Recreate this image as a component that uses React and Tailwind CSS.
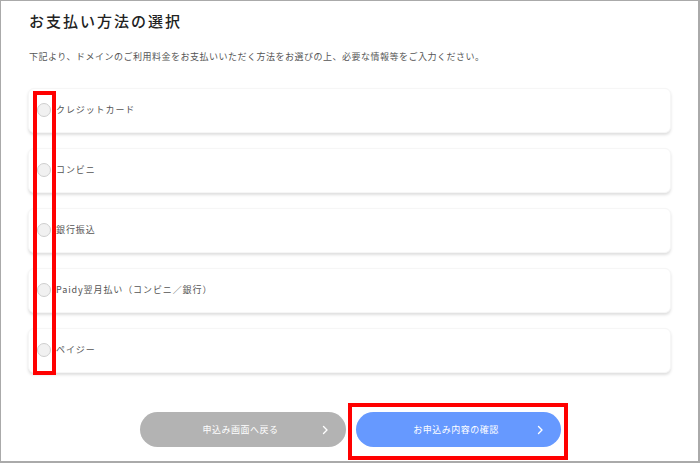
import React from 'react';

const methods = ['クレジットカード', 'コンビニ', '銀行振込', 'Paidy翌月払い（コンビニ／銀行）', 'ペイジー'];

const Chevron = () => (
	<svg width="8" height="10" viewBox="0 0 8 10" fill="none" stroke="white" strokeWidth="1.4" strokeLinecap="round" strokeLinejoin="round">
		<polyline points="2.5,1.5 6,5 2.5,8.5" />
	</svg>
);

const App = () => {
	return (
		<div
			className="relative w-[700px] h-[463px] bg-white border-l border-t border-r-2 border-b-2 border-[#aaaaaa] overflow-hidden"
			style={{ fontFamily: '"Noto Sans CJK JP", "Noto Sans", sans-serif' }}
		>
			<div className="px-[27px] pt-[9px]">
				<h1 className="text-[15px] leading-[22px] font-medium tracking-[2px] text-[#222] pl-[1px]">お支払い方法の選択</h1>
				<p className="mt-[18px] text-[9px] leading-[14px] tracking-[0.5px] text-[#555] pl-[1px]">
					下記より、ドメインのご利用料金をお支払いいただく方法をお選びの上、必要な情報等をご入力ください。
				</p>

				<div className="mt-[24px] flex flex-col gap-[15px]">
					{methods.map((m) => (
						<label key={m} className="h-[45px] bg-white rounded-[6px] border border-[#f6f6f6] shadow-[0_2px_3px_rgba(0,0,0,0.13)] flex items-center pl-[8px] pb-[2px]">
							<span className="w-[14px] h-[14px] rounded-full border border-[#cfcfcf] bg-[#f1f1f1] shrink-0" />
							<span className="ml-[5px] text-[9px] tracking-[0.9px] text-[#555]">{m}</span>
						</label>
					))}
				</div>

				<div className="mt-[39px] flex justify-center gap-[10px] pl-[1px]">
					<button className="relative w-[206px] h-[35px] rounded-full bg-[#b3b3b3] text-white text-[9px] tracking-[0.5px] flex items-center justify-center">
						<span className="-ml-[4px]">申込み画面へ戻る</span>
						<span className="absolute right-[17px] top-1/2 -translate-y-1/2"><Chevron /></span>
					</button>
					<button className="relative w-[205px] h-[35px] rounded-full bg-[#6699ff] text-white text-[9px] tracking-[0.5px] flex items-center justify-center">
						<span className="-ml-[4px]">お申込み内容の確認</span>
						<span className="absolute right-[17px] top-1/2 -translate-y-1/2"><Chevron /></span>
					</button>
				</div>
			</div>

			<div className="absolute left-[32px] top-[90px] w-[23px] h-[284px] border-[4px] border-[#ff0000] pointer-events-none" />
			<div className="absolute left-[347px] top-[402px] w-[220px] h-[57px] border-[4px] border-[#ff0000] pointer-events-none" />
		</div>
	);
};

export default App;
